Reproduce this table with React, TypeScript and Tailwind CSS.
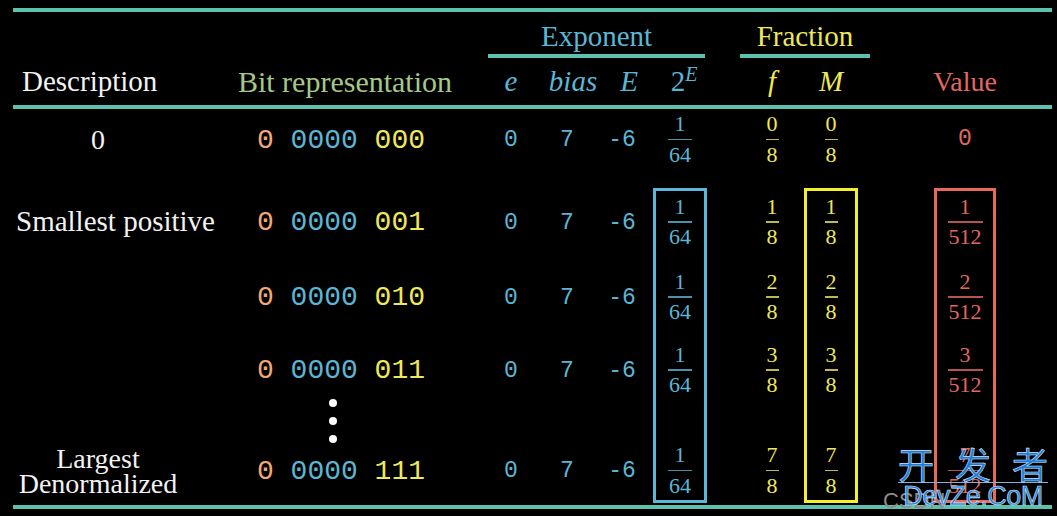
import type { ReactNode } from 'react';

const serif = "font-['Liberation_Serif',serif]";
const mono = "font-['Liberation_Mono',monospace]";

const LINE = 'bg-[#5cc2ae]';
const BLUE = 'text-[#5bb6d6]';
const YELLOW = 'text-[#efe85a]';
const RED = 'text-[#e2685f]';

function Frac({ n, d, color }: { n: string; d: string; color: string }) {
  return (
    <div className={`inline-flex flex-col items-center ${serif} text-[22px] leading-[22px] ${color}`}>
      <span className="px-[1px]">{n}</span>
      <span className="my-[3.5px] h-[1.5px] self-stretch bg-current opacity-80" />
      <span className="px-[1px]">{d}</span>
    </div>
  );
}

interface RowData {
  row: string;
  desc: ReactNode;
  bits: string;
  f: string;
  value: ReactNode;
}

const rows: RowData[] = [
  {
    row: 'row-start-6',
    desc: <div className="flex w-full justify-center">0</div>,
    bits: '000',
    f: '0',
    value: <span className={`${mono} text-[23px] ${RED}`}>0</span>,
  },
  {
    row: 'row-start-8',
    desc: <div className="w-full whitespace-nowrap pl-[3px] text-[29px]">Smallest positive</div>,
    bits: '001',
    f: '1',
    value: <Frac n="1" d="512" color={RED} />,
  },
  {
    row: 'row-start-9',
    desc: null,
    bits: '010',
    f: '2',
    value: <Frac n="2" d="512" color={RED} />,
  },
  {
    row: 'row-start-10',
    desc: null,
    bits: '011',
    f: '3',
    value: <Frac n="3" d="512" color={RED} />,
  },
  {
    row: 'row-start-12',
    desc: (
      <div className="w-full text-center leading-[25px]">
        Largest
        <br />
        Denormalized
      </div>
    ),
    bits: '111',
    f: '7',
    value: <Frac n="7" d="512" color={RED} />,
  },
];

function DataRow({ r }: { r: RowData }) {
  const cell = `${r.row} flex items-center justify-center`;
  return (
    <>
      <div className={`${r.row} col-start-1 flex items-center ${serif} text-[28px] text-[#f2f2f2]`}>{r.desc}</div>
      <div className={`${cell} col-start-2 pt-[2px] ${mono} text-[28px] whitespace-pre`}>
        <span className="text-[#f0a878]">0</span>
        <span> </span>
        <span className={BLUE}>0000</span>
        <span> </span>
        <span className={YELLOW}>{r.bits}</span>
      </div>
      <div className={`${cell} col-start-3 pt-[2px] ${mono} text-[23px] ${BLUE}`}>0</div>
      <div className={`${cell} col-start-4 pt-[2px] pr-[6px] ${mono} text-[23px] ${BLUE}`}>7</div>
      <div className={`${cell} col-start-5 pt-[2px] pr-[4px] ${mono} text-[23px] ${BLUE} whitespace-nowrap`}>-6</div>
      <div className={`${cell} col-start-7`}>
        <Frac n="1" d="64" color={BLUE} />
      </div>
      <div className={`${cell} col-start-9`}>
        <Frac n={r.f} d="8" color={YELLOW} />
      </div>
      <div className={`${cell} col-start-10`}>
        <Frac n={r.f} d="8" color={YELLOW} />
      </div>
      <div className={`${cell} col-start-12`}>{r.value}</div>
    </>
  );
}

export default function App() {
  return (
    <div className="relative h-[516px] w-[1057px] overflow-hidden bg-black">
      <div className="ml-[13px] grid grid-cols-[170px_316px_24px_94px_14px_22px_54px_33px_64px_54px_76px_62px_56px] grid-rows-[4px_42px_4px_47px_4px_61px_15px_74px_76px_70px_31px_69px_4px] pt-[8px]">
        {/* rules */}
        <div className={`col-span-full row-start-1 ${LINE}`} />
        <div className={`col-span-full row-start-5 ${LINE}`} />
        <div className={`col-span-full row-start-13 ${LINE}`} />

        {/* group headers */}
        <div className={`col-[3/8] row-start-2 -ml-[11px] mr-[2px] flex items-end justify-center pb-[3px] ${serif} text-[29px] leading-none ${BLUE}`}>
          Exponent
        </div>
        <div className={`col-[3/8] row-start-3 -ml-[11px] mr-[2px] ${LINE}`} />
        <div className={`col-[9/11] row-start-2 -mr-[12px] flex items-end justify-center pb-[3px] ${serif} text-[29px] leading-none ${YELLOW}`}>
          Fraction
        </div>
        <div className={`col-[9/11] row-start-3 -mr-[12px] ${LINE}`} />

        {/* column headers */}
        <div className={`col-start-1 row-start-4 flex items-center pl-[9px] ${serif} text-[29px] text-[#f2f2f2]`}>Description</div>
        <div className={`col-start-2 row-start-4 flex items-center justify-center pl-[8px] ${serif} text-[30px] whitespace-nowrap text-[#a5c78a]`}>
          Bit representation
        </div>
        <div className={`col-start-3 row-start-4 flex items-center justify-center ${serif} text-[29px] italic ${BLUE}`}>e</div>
        <div className={`col-start-4 row-start-4 flex items-center justify-center pl-[6px] ${serif} text-[29px] italic ${BLUE}`}>bias</div>
        <div className={`col-start-5 row-start-4 flex items-center justify-center pl-[10px] ${serif} text-[29px] italic ${BLUE}`}>E</div>
        <div className={`col-start-7 row-start-4 flex items-center justify-center pl-[8px] ${serif} text-[29px] ${BLUE}`}>
          <span>
            2<sup className="text-[20px] italic">E</sup>
          </span>
        </div>
        <div className={`col-start-9 row-start-4 flex items-center justify-center ${serif} text-[29px] italic ${YELLOW}`}>f</div>
        <div className={`col-start-10 row-start-4 flex items-center justify-center ${serif} text-[29px] italic ${YELLOW}`}>M</div>
        <div className={`col-start-12 row-start-4 flex items-center justify-center ${serif} text-[28px] ${RED}`}>Value</div>

        {rows.map((r) => (
          <DataRow key={r.row} r={r} />
        ))}

        {/* vertical ellipsis */}
        <div className="col-start-2 row-start-11 flex flex-col items-center justify-center gap-[10px] pr-[16px]">
          <span className="h-[8px] w-[8px] shrink-0 rounded-full bg-white" />
          <span className="h-[8px] w-[8px] shrink-0 rounded-full bg-white" />
          <span className="h-[8px] w-[8px] shrink-0 rounded-full bg-white" />
        </div>

        {/* highlight boxes */}
        <div className="col-start-7 row-[8/13] mt-[3px] mb-[2px] border-[3px] border-[#5bb6d8]" />
        <div className="col-start-10 row-[8/13] mt-[3px] mb-[2px] border-[3px] border-[#f6f02a]" />
        <div className="col-start-12 row-[8/13] mt-[3px] mb-[2px] border-[3px] border-[#e8685a]" />
      </div>

      {/* watermark */}
      <div className="absolute left-[883px] top-[484px] font-['Liberation_Sans',sans-serif] text-[22px] text-[#8c8c8c]">CSDN</div>
      <div className="absolute left-[898px] top-[444px] flex w-[150px] flex-col items-stretch">
        <div className="flex justify-between border-b border-[#7fb0e0] font-['Noto_Sans_CJK_SC',sans-serif] text-[36px] leading-[38px] text-[#1f7ad6] [-webkit-text-stroke:0.6px_#cfe4ff]">
          <span>开</span>
          <span>发</span>
          <span>者</span>
        </div>
        <div className="text-center font-['Liberation_Sans',sans-serif] text-[27px] leading-[26px] tracking-[-0.5px] text-[#2a7fd6] [-webkit-text-stroke:0.6px_#d8eaff]">
          DevZe.CoM
        </div>
      </div>
    </div>
  );
}
